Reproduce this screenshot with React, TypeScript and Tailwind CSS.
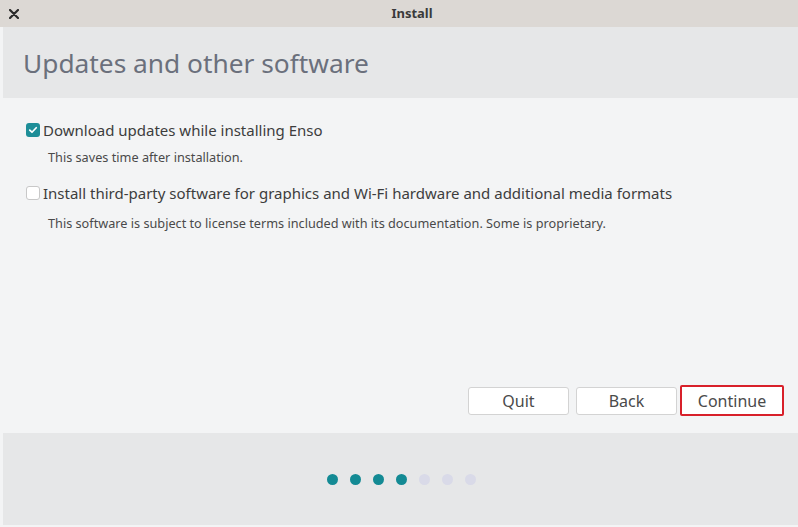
import React from 'react';

const font = { fontFamily: '"Noto Sans", "Open Sans", sans-serif' };

const Checkbox: React.FC<{ checked?: boolean }> = ({ checked }) =>
  checked ? (
    <span className="flex h-[14px] w-[14px] shrink-0 items-center justify-center rounded-[3px] bg-[#1d8e98]">
      <svg viewBox="0 0 14 14" className="h-[12px] w-[12px]">
        <path d="M3.2 7.2 L5.8 9.6 L10.8 4.4" fill="none" stroke="#fff" strokeWidth="2" strokeLinecap="round" strokeLinejoin="round" />
      </svg>
    </span>
  ) : (
    <span className="h-[14px] w-[14px] shrink-0 rounded-[3px] border border-[#c8c8c8] bg-white" />
  );

const Option: React.FC<{ checked?: boolean; label: string; hint: string; hintGap: string }> = ({
  checked,
  label,
  hint,
  hintGap,
}) => (
  <div>
    <div className="flex items-center gap-[3px]">
      <Checkbox checked={checked} />
      <span className="text-[15px] leading-[20px] text-[#3d3d3d]">{label}</span>
    </div>
    <p className={`${hintGap} pl-[22px] text-[12.7px] leading-[16px] text-[#4a4a4a]`}>{hint}</p>
  </div>
);

const Button: React.FC<{ label: string; active?: boolean }> = ({ label, active }) => (
  <button
    className={
      active
        ? 'ml-[3px] h-[31px] w-[104px] rounded-[2px] border-2 border-[#d8202a] bg-white text-[16px] text-[#4a4a4a]'
        : 'ml-[7px] h-[28px] w-[101px] rounded-[3px] border border-[#d3d3d3] bg-white text-[16px] text-[#4a4a4a]'
    }
  >
    {label}
  </button>
);

export default function App() {
  const dots = [true, true, true, true, false, false, false];
  return (
    <div className="flex h-[527px] w-[798px] flex-col bg-[#f3f4f5]" style={font}>
      <div className="relative flex h-[27px] shrink-0 items-center justify-center bg-[#dcd8d4]">
        <svg viewBox="0 0 10 10" className="absolute left-[9px] top-[9px] h-[10px] w-[10px]">
          <path d="M1 1 L9 9 M9 1 L1 9" stroke="#2b2b2b" strokeWidth="2.2" strokeLinecap="round" />
        </svg>
        <span className="ml-[26px] text-[13px] font-bold text-[#3a3a3a]">Install</span>
      </div>
      <div className="flex flex-1 flex-col pl-[3px]">
        <div className="flex h-[71px] shrink-0 items-center bg-[#e6e7e8] pl-[20px]">
          <h1 className="text-[26.3px] leading-[32px] text-[#6b707c]">Updates and other software</h1>
        </div>
        <div className="flex flex-1 flex-col pl-[23px] pr-[14px] pt-[22px]">
          <div className="flex flex-col gap-[18px]">
            <Option checked label="Download updates while installing Enso" hint="This saves time after installation." hintGap="mt-[9px]" />
            <Option
              label="Install third-party software for graphics and Wi-Fi hardware and additional media formats"
              hint="This software is subject to license terms included with its documentation. Some is proprietary."
              hintGap="mt-[12px]"
            />
          </div>
          <div className="mt-auto mb-[17px] flex items-center justify-end">
            <Button label="Quit" />
            <Button label="Back" />
            <Button label="Continue" active />
          </div>
        </div>
        <div className="mb-[2px] flex h-[92px] shrink-0 items-center justify-center gap-[12px] bg-[#e6e7e8] pl-[2px]">
          {dots.map((on, i) => (
            <span key={i} className={on ? 'h-[11px] w-[11px] rounded-full bg-[#138a94]' : 'h-[11px] w-[11px] rounded-full bg-[#d9dae8]'} />
          ))}
        </div>
      </div>
    </div>
  );
}
